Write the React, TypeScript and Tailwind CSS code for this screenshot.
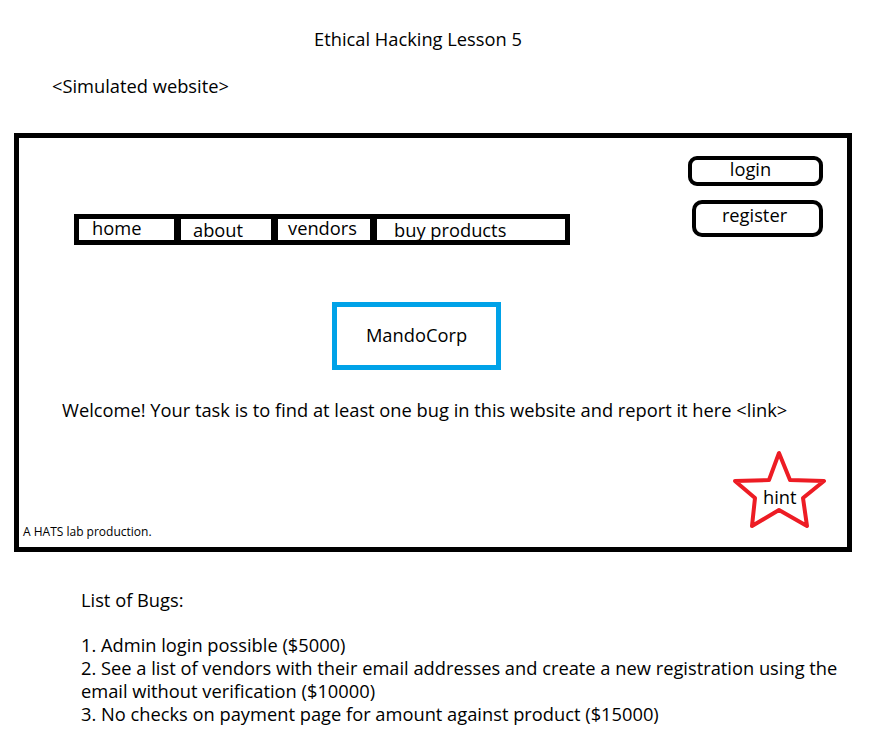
import React from "react";

const navItems = [
  { label: "home", w: "w-[95px]", pl: "pl-[13px]", pt: "pt-0" },
  { label: "about", w: "w-[90px]", pl: "pl-[12px]", pt: "pt-[2px]" },
  { label: "vendors", w: "w-[92px]", pl: "pl-[10px]", pt: "pt-0" },
  { label: "buy products", w: "w-[188px]", pl: "pl-[17px]", pt: "pt-[2px]" },
];

function Star() {
  return (
    <div className="relative w-[94px] h-[80px] mr-[20px] mb-[17px]">
      <svg width="94" height="80" viewBox="0 0 94 80" className="absolute inset-0">
        <polygon
          points="46,3 36,30 2,31 22,48 19,76 46,60 74,76 70,48 91,31 57,30"
          fill="none"
          stroke="#ed1c24"
          strokeWidth="4"
          strokeLinejoin="round"
        />
      </svg>
      <span className="absolute left-[30px] top-[36px] leading-[22px]">hint</span>
    </div>
  );
}

export default function App() {
  return (
    <div className="w-[893px] h-[737px] bg-white text-black font-['Open_Sans',sans-serif] font-medium text-[18.3px]">
      <div className="pt-[28px] pl-[314px] leading-[22px]">Ethical Hacking Lesson 5</div>
      <div className="pt-[25px] pl-[52px] leading-[22px]">&lt;Simulated website&gt;</div>

      <div className="ml-[14px] mt-[36px] w-[838px] h-[419px] border-[5px] border-black flex flex-col">
        <div className="flex items-start">
          <nav className="ml-[55px] mt-[76px] bg-black p-[5px] flex gap-[7px]">
            {navItems.map((n) => (
              <div key={n.label} className={`${n.w} ${n.pl} ${n.pt} h-[21px] bg-white leading-[18px] whitespace-nowrap`}>
                {n.label}
              </div>
            ))}
          </nav>
          <div className="ml-auto mr-[24px] mt-[18px] flex flex-col items-end gap-[14px]">
            <div className="w-[135px] h-[30px] border-[4px] border-black rounded-[9px] flex items-center justify-center pb-[3px] pr-[10px] leading-none">
              login
            </div>
            <div className="w-[131px] h-[37px] border-[4px] border-black rounded-[10px] flex items-center justify-center pb-[6px] pr-[6px] leading-none">
              register
            </div>
          </div>
        </div>

        <div className="ml-[313px] mt-[57px] w-[169px] h-[68px] border-[5px] border-[#00a2e8] flex items-center justify-center pb-[2px]">
          MandoCorp
        </div>

        <p className="ml-[43px] mt-[29px] leading-[22px] whitespace-nowrap">
          Welcome! Your task is to find at least one bug in this website and report it here &lt;link&gt;
        </p>

        <div className="mt-auto flex items-end justify-between">
          <span className="pl-[4px] pb-[8px] text-[12px] leading-[14px]">A HATS lab production.</span>
          <Star />
        </div>
      </div>

      <div className="pl-[81px] pt-[37px] leading-[22.7px] whitespace-nowrap">
        <div>List of Bugs:</div>
        <div>&nbsp;</div>
        <div>1. Admin login possible ($5000)</div>
        <div>
          2. See a list of vendors with their email addresses and create a new registration using the
          <br />
          email without verification ($10000)
        </div>
        <div>3. No checks on payment page for amount against product ($15000)</div>
      </div>
    </div>
  );
}
